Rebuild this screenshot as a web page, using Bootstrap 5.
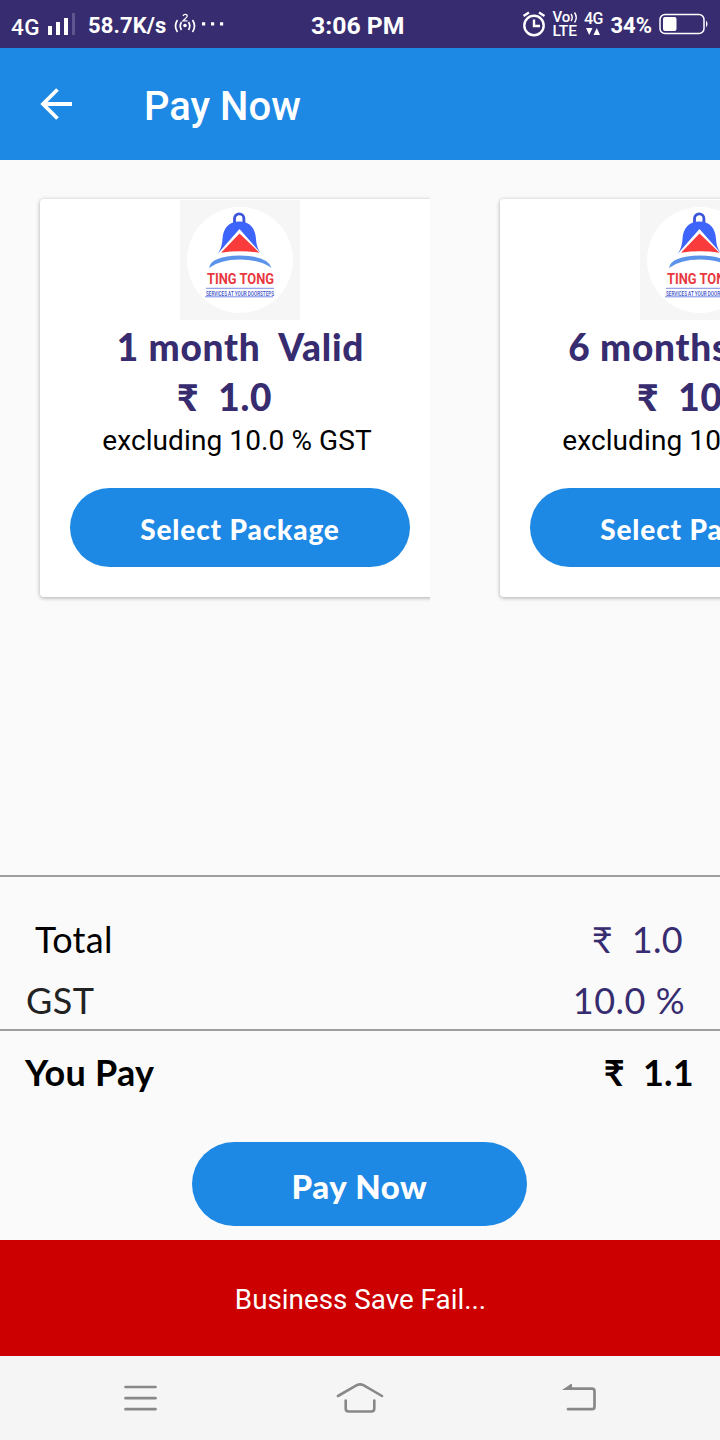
<!DOCTYPE html>
<html lang="en">
<head>
<meta charset="utf-8">
<meta name="viewport" content="width=device-width, initial-scale=1">
<title>Pay Now</title>
<link rel="stylesheet" href="https://cdn.jsdelivr.net/npm/bootstrap@5.3.0/dist/css/bootstrap.min.css">
<style>
  :root { --brand: #1e88e5; --ink: #372c6f; --page: #fafafa; }
  body { width: 720px; height: 1440px; overflow: hidden; background: var(--page); color: #000; font-family: Roboto, sans-serif; }
  .round-face { font-family: Lato, "Noto Sans", sans-serif; }
  .pre { white-space: pre; }
  .text-ink { color: var(--ink); }

  .status { height: 48px; background: var(--ink); color: #fff; line-height: 52px; font-size: 22px; }
  .status svg { display: block; flex: none; }
  .net-type { margin-left: 11px; width: 32px; font-size: 22.5px; font-weight: 500; line-height: 54px; letter-spacing: .4px; }
  .speed { margin-left: 13px; width: 86px; font-weight: 700; letter-spacing: .1px; }
  .clock { margin-left: 81px; font-size: 24.8px; font-weight: 700; }
  .volte { width: 27px; margin-left: 4px; padding-top: 10px; font-size: 15px; font-weight: 500; line-height: 14px; }
  .volte .lte { font-size: 15.5px; letter-spacing: -.1px; }
  .cell { width: 20px; margin-left: 4px; padding-top: 12px; font-size: 16px; font-weight: 500; line-height: 14px; letter-spacing: -.6px; }
  .charge { margin-left: 7px; font-weight: 700; }
  .battery { margin: 0 11px 0 7px; }

  .appbar { height: 112px; background: var(--brand); color: #fff; padding-left: 40px; }
  .appbar h1 { font-size: 40px; font-weight: 500; line-height: 108px; margin: 6px 0 0 72px; }

  .offers { height: 715px; padding-top: 30px; }
  .slot { flex: 0 0 400px; height: 420px; padding: 9px 0 0 10px; overflow: hidden; margin-left: 30px; }
  .slot + .slot { margin-left: 60px; }
  .pack { width: 400px; height: 398px; border: 0; border-radius: 4px; background: #fff; box-shadow: 0 1px 4px rgba(0,0,0,.32); --bs-card-color: #000; padding: 1px 0 30px; }
  .pack-name, .pack-price { font-size: 37px; font-weight: 900; letter-spacing: .75px; line-height: 50px; }
  .pack-name { padding: 2px 0 0 1px; }
  .pack-price { align-self: flex-start; padding-left: 137px; }
  .pack-tax { font-size: 28px; line-height: 36px; letter-spacing: .1px; padding: 1px 6px 0 0; }
  .pill { background: var(--brand); color: #fff; border: 0; border-radius: 50px; font-weight: 900; padding: 0; }
  .pill:hover { background: #1976d2; color: #fff; }
  .pill-pack { width: 340px; height: 79px; font-size: 28px; line-height: 82px; letter-spacing: .85px; }
  .pill-pay { width: 335px; height: 84px; font-size: 33px; line-height: 88px; letter-spacing: .6px; }

  .rule { border-top: 2px solid #9e9e9e; }
  .sum { font-size: 36px; line-height: 60px; }
  .sum-total { padding: 32px 37px 0 35px; letter-spacing: .3px; }
  .sum-gst { padding: 1px 35px 0 26px; height: 60px; color: #222; letter-spacing: .5px; }
  .sum-pay { padding: 11px 26px 0 25px; font-weight: 700; letter-spacing: .25px; }
  .pay-row { padding: 40px 1px 14px 0; line-height: 0; }

  .toast-strip { height: 116px; background: #c00; color: #fff; font-size: 27.8px; line-height: 120px; padding-left: 1px; }
  .navkeys { height: 84px; background: #f5f5f5; padding: 0 124px; }
</style>
</head>
<body>
<svg width="0" height="0" class="d-none">
  <symbol id="logo" viewBox="0 0 120 120">
    <rect width="120" height="120" fill="#f6f6f6"/>
    <circle cx="60" cy="60" r="53" fill="#fff"/>
    <path d="M54.500 23v-4.500a4.700 4.700 0 0 1 9.400 0V23" fill="none" stroke="#3a55d8" stroke-width="2.800"/>
    <path d="M37.500 54c3.500-5 4.500-9 5-15 .8-11 6-17.500 16.800-17.500S75.200 28 76 39c.5 6 1.500 10 5.500 15L59.500 29z" fill="#3d64fb"/>
    <path d="M59.500 33.500 79.500 52.700Q60 50 41 52.700z" fill="#f93b3b"/>
    <path d="M29 68Q31 56 60 55.500 88 56 91.500 68 80 59.500 60 59.500 40 59.500 29 68z" fill="#5b93ea"/>
    <text x="27" y="84.300" font-family="Roboto" font-weight="700" font-size="15.500" fill="#e8393f" textLength="67" lengthAdjust="spacingAndGlyphs">TING TONG</text>
    <text x="26" y="95.500" font-family="Roboto" font-weight="500" font-size="8" fill="#3d50c8" textLength="68" lengthAdjust="spacingAndGlyphs">SERVICES AT YOUR DOORSTEPS</text>
    <path d="M26 88.300h68M25 96.800h68" stroke="#5a6ee0" stroke-width=".8"/>
  </symbol>
</svg>

<header class="status d-flex">
  <span class="net-type">4G</span>
  <svg width="32" height="48" viewBox="0 0 32 48" fill="none" stroke-width="4"><path d="M7 35v-9M15 35V22M23 35V18" stroke="#fff"/><path d="M30.500 35V13" stroke="#5e5591" stroke-width="3"/></svg>
  <span class="speed">58.7K/s</span>
  <svg width="56" height="48" viewBox="0 0 56 48" fill="none" stroke="#fff" stroke-width="1.700"><path d="M3.500 20q-4 6 0 12M7.500 22q-2.500 4 0 8M14.500 22q2.500 4 0 8M18.500 20q4 6 0 12"/><circle cx="11" cy="25.500" r="1.800" fill="#fff" stroke="none"/><path d="M9 16q.5-1.700 2.200-1.700 2 0 2 1.700 0 1.300-4.200 4.800h4.500" stroke-width="1.200"/><path d="M28 22.200h3.200v3.200H28zM37 22.200h3.200v3.200H37zM46 22.200h3.200v3.200H46z" fill="#fff" stroke="none"/></svg>
  <span class="clock">3:06 PM</span>
  <svg width="26" height="48" viewBox="0 0 26 48" class="ms-auto" fill="none" stroke="#fff" stroke-width="2.400"><circle cx="12" cy="25.500" r="9.700"/><path d="M12 19.500V26h6M1.500 16 7 12.500M17 12.500l5.500 3.500"/></svg>
  <div class="volte d-flex flex-column"><span class="d-flex">Vo<svg width="8" height="14" viewBox="0 0 8 14" fill="none" stroke="#fff" stroke-width="1.400"><path d="M1 4q2.500 3.500 0 7M4.500 2.500q3.500 5 0 10"/></svg></span><span class="lte">LTE</span></div>
  <div class="cell d-flex flex-column align-items-center"><span>4G</span><svg width="16" height="10" viewBox="0 0 16 10" fill="#fff"><path d="M1 2h6.500L4.200 9zM8.500 9H15l-3.200-7z"/></svg></div>
  <span class="charge">34%</span>
  <svg class="battery" width="50" height="48" viewBox="0 0 50 48"><rect x="1" y="14.500" width="44" height="19" rx="5" fill="none" stroke="#fff" stroke-width="1.500"/><rect x="4" y="17" width="13.500" height="14" rx="2" fill="#fff"/><path d="M47 20.500q3 3.500 0 7z" fill="#fff"/></svg>
</header>

<nav class="appbar d-flex align-items-center">
  <svg width="32" height="32" viewBox="0 0 32 32" fill="none" stroke="#fff" stroke-width="3.800"><path d="M32 16H3M17.500 1.500 3 16l14.500 14.500"/></svg>
  <h1>Pay Now</h1>
</nav>

<main>
  <section class="offers d-flex overflow-hidden">
    <div class="slot">
      <article class="card pack align-items-center">
        <svg width="120" height="120"><use href="#logo"/></svg>
        <div class="pack-name round-face text-ink pre">1 month  Valid</div>
        <div class="pack-price round-face text-ink pre">₹  1.0</div>
        <div class="pack-tax">excluding 10.0 % GST</div>
        <button class="btn pill pill-pack round-face mt-auto">Select Package</button>
      </article>
    </div>
    <div class="slot">
      <article class="card pack align-items-center">
        <svg width="120" height="120"><use href="#logo"/></svg>
        <div class="pack-name round-face text-ink pre">6 months  Valid</div>
        <div class="pack-price round-face text-ink pre">₹  10.0</div>
        <div class="pack-tax">excluding 10.0 % GST</div>
        <button class="btn pill pill-pack round-face mt-auto">Select Package</button>
      </article>
    </div>
  </section>
  <section class="rule round-face sum">
    <div class="sum-total d-flex justify-content-between"><span>Total</span><span class="text-ink pre">₹  1.0</span></div>
    <div class="sum-gst d-flex justify-content-between"><span>GST</span><span class="text-ink">10.0 %</span></div>
  </section>
  <section class="rule round-face sum">
    <div class="sum-pay d-flex justify-content-between"><span>You Pay</span><span class="pre">₹  1.1</span></div>
    <div class="pay-row text-center"><button class="btn pill pill-pay">Pay Now</button></div>
  </section>
</main>

<div class="toast-strip text-center">Business Save Fail...</div>

<footer class="navkeys d-flex justify-content-between align-items-center">
  <svg width="33" height="28" viewBox="0 0 33 28" stroke="#888" stroke-width="2.700" stroke-linecap="round"><path d="M1.500 3h30M1.500 14.200h30M1.500 25.200h30"/></svg>
  <svg width="48" height="30" viewBox="0 0 48 30" fill="none" stroke="#888" stroke-width="2.600" stroke-linecap="round"><path d="M2 13 20.800 2.200q3.300-1.600 6.600 0L46 13M9.700 17.500v8q0 3 3 3h22.600q3 0 3-3v-8"/></svg>
  <svg width="34" height="28" viewBox="0 0 34 28" fill="none" stroke="#888" stroke-width="2.700"><path d="M9 4.700h21q2.500 0 2.500 2.500v15.500q0 2.500-2.500 2.500H6" stroke-linecap="round"/><path d="M0 6 10-.8V6z" fill="#888" stroke="none"/></svg>
</footer>
<script src="https://cdn.jsdelivr.net/npm/bootstrap@5.3.0/dist/js/bootstrap.bundle.min.js"></script>
</body>
</html>
